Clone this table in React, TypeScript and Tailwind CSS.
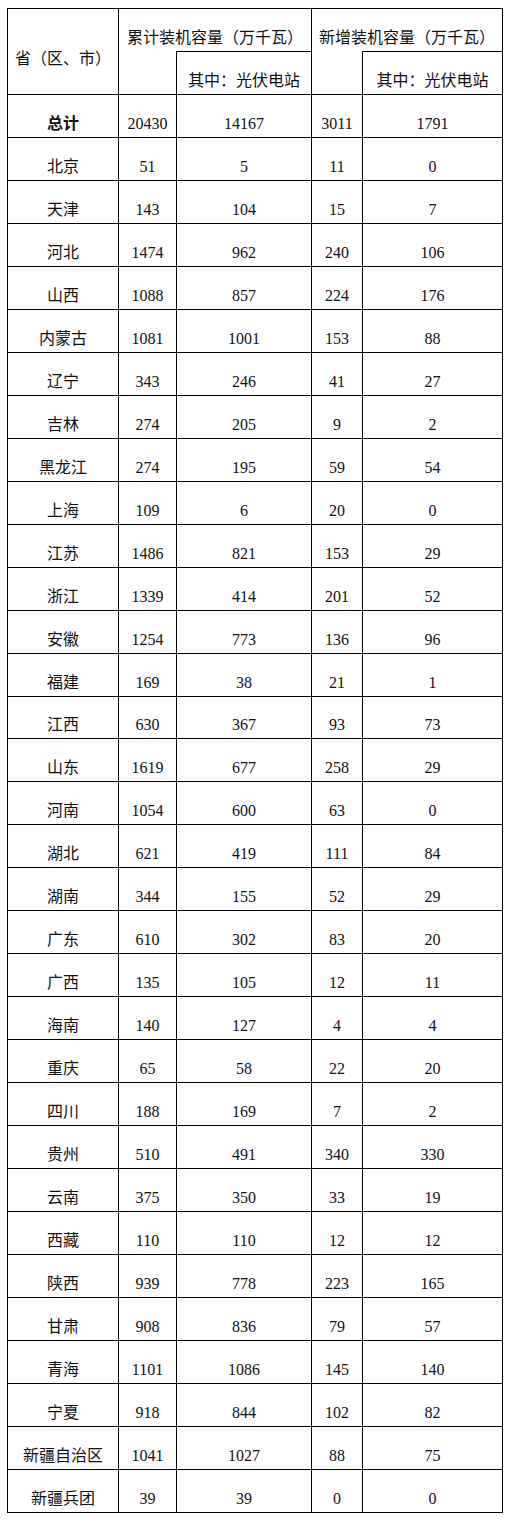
import React from "react";

const rows: [string, number, number, number, number][] = [
  ["北京", 51, 5, 11, 0],
  ["天津", 143, 104, 15, 7],
  ["河北", 1474, 962, 240, 106],
  ["山西", 1088, 857, 224, 176],
  ["内蒙古", 1081, 1001, 153, 88],
  ["辽宁", 343, 246, 41, 27],
  ["吉林", 274, 205, 9, 2],
  ["黑龙江", 274, 195, 59, 54],
  ["上海", 109, 6, 20, 0],
  ["江苏", 1486, 821, 153, 29],
  ["浙江", 1339, 414, 201, 52],
  ["安徽", 1254, 773, 136, 96],
  ["福建", 169, 38, 21, 1],
  ["江西", 630, 367, 93, 73],
  ["山东", 1619, 677, 258, 29],
  ["河南", 1054, 600, 63, 0],
  ["湖北", 621, 419, 111, 84],
  ["湖南", 344, 155, 52, 29],
  ["广东", 610, 302, 83, 20],
  ["广西", 135, 105, 12, 11],
  ["海南", 140, 127, 4, 4],
  ["重庆", 65, 58, 22, 20],
  ["四川", 188, 169, 7, 2],
  ["贵州", 510, 491, 340, 330],
  ["云南", 375, 350, 33, 19],
  ["西藏", 110, 110, 12, 12],
  ["陕西", 939, 778, 223, 165],
  ["甘肃", 908, 836, 79, 57],
  ["青海", 1101, 1086, 145, 140],
  ["宁夏", 918, 844, 102, 82],
  ["新疆自治区", 1041, 1027, 88, 75],
  ["新疆兵团", 39, 39, 0, 0],
];

const cell =
  "border border-black text-center align-middle pt-[16px] px-0 leading-[18px] whitespace-nowrap";
const rowH = "h-[42.97px]";

export default function App() {
  return (
    <div
      className="bg-white min-h-[1524px] w-[508px] pl-[7px] pt-[8px] text-[16px] text-[#111]"
      style={{ fontFamily: '"Liberation Serif", "Noto Sans CJK SC", serif' }}
    >
      <table className="border-collapse table-fixed w-[495px]">
        <colgroup>
          <col className="w-[111px]" />
          <col className="w-[58px]" />
          <col className="w-[135px]" />
          <col className="w-[51px]" />
          <col className="w-[140px]" />
        </colgroup>
        <thead>
          <tr className={rowH}>
            <td rowSpan={2} className={cell + " font-normal"}>
              省（区、市）
            </td>
            <td colSpan={2} className={cell + " border-b-0"}>
              累计装机容量（万千瓦）
            </td>
            <td colSpan={2} className={cell + " border-b-0"}>
              新增装机容量（万千瓦）
            </td>
          </tr>
          <tr className={rowH}>
            <td className={cell + " border-t-0"}></td>
            <td className={cell}>其中：光伏电站</td>
            <td className={cell + " border-t-0"}></td>
            <td className={cell}>其中：光伏电站</td>
          </tr>
        </thead>
        <tbody>
          <tr className={rowH}>
            <td className={cell + " font-bold"}>总计</td>
            <td className={cell}>20430</td>
            <td className={cell}>14167</td>
            <td className={cell}>3011</td>
            <td className={cell}>1791</td>
          </tr>
          {rows.map((r) => (
            <tr key={r[0]} className={rowH}>
              <td className={cell}>{r[0]}</td>
              <td className={cell}>{r[1]}</td>
              <td className={cell}>{r[2]}</td>
              <td className={cell}>{r[3]}</td>
              <td className={cell}>{r[4]}</td>
            </tr>
          ))}
        </tbody>
      </table>
    </div>
  );
}
